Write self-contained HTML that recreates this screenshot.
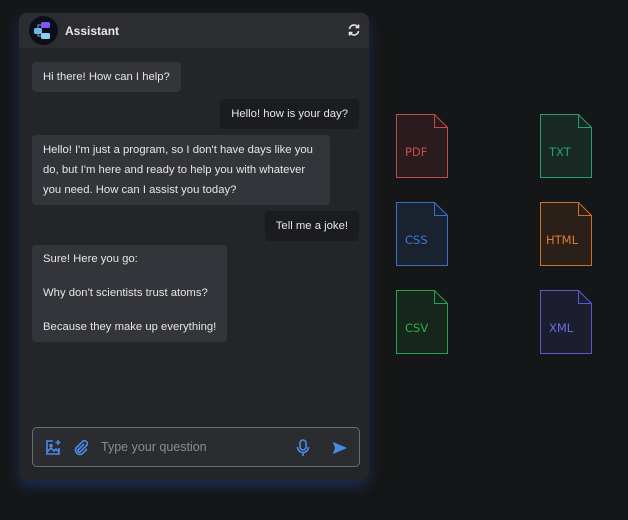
<!DOCTYPE html>
<html><head><style>
*{margin:0;padding:0;box-sizing:border-box}
body{width:628px;height:520px;background:#151617;font-family:"Liberation Sans",sans-serif;position:relative;overflow:hidden}
.panel{position:absolute;left:19px;top:13px;width:350px;height:467px;background:#232529;border-radius:8px;box-shadow:0 6px 14px rgba(40,90,200,.35)}
.hdr{height:35px;background:#2c2d31;border-radius:8px 8px 0 0;position:relative}
.av{position:absolute;left:10px;top:3px;width:29px;height:29px;border-radius:50%;background:#0c0e1a}
.ttl{position:absolute;left:46px;top:11px;color:#e8e8e8;font-size:12px;font-weight:bold}
.b{position:absolute;font-size:11.3px;color:#e6e6e6;line-height:20px;padding:5px 11px;border-radius:4px;white-space:nowrap}
.bot{background:#33353a;left:13px}
.usr{background:#1b1c1f;right:10px}
.inp{position:absolute;left:13px;top:414px;width:328px;height:40px;border:1px solid #6b6d72;border-radius:5px;background:#2a2c30}
.ph{position:absolute;left:68px;top:12px;color:#8a8c90;font-size:12.5px}
.f{position:absolute;width:52px;height:64px}
.f span{position:absolute;left:9px;top:31px;font-family:"DejaVu Sans",sans-serif;font-size:11.5px}
</style></head><body>
<div class="panel">
<div class="hdr"><div class="av"><svg width="29" height="29"><rect x="12" y="6" width="9" height="6" rx="1.5" fill="#7a5af0"/><rect x="5" y="12" width="8" height="6" rx="1.5" fill="#6ab8e8"/><rect x="12" y="17" width="9" height="6" rx="1.5" fill="#8ad0f0"/><path d="M9 12V9h3M9 18v2h3" stroke="#8aa" fill="none"/></svg></div><div class="ttl">Assistant</div>
<svg style="position:absolute;right:8px;top:10px" width="14" height="14" viewBox="0 0 14 14" fill="none" stroke="#e8e8e8" stroke-width="1.6"><path d="M2.5 6A4.5 4.5 0 0 1 11 4.5M11.5 8A4.5 4.5 0 0 1 3 9.5"/><path d="M11.5 1.5v3h-3M2.5 12.5v-3h3"/></svg></div>
<div class="b bot" style="top:49px">Hi there! How can I help?</div>
<div class="b usr" style="top:86px">Hello! how is your day?</div>
<div class="b bot" style="top:122px;width:298px">Hello! I'm just a program, so I don't have days like you<br>do, but I'm here and ready to help you with whatever<br>you need. How can I assist you today?</div>
<div class="b usr" style="top:198px">Tell me a joke!</div>
<div class="b bot" style="top:232px;width:195px;line-height:17px;padding:6px 11px">Sure! Here you go:<br><br>Why don't scientists trust atoms?<br><br>Because they make up everything!</div>
<div class="inp">
<svg style="position:absolute;left:11px;top:11px" width="18" height="18" viewBox="0 0 18 18" fill="none" stroke="#4a8ae8" stroke-width="1.6"><path d="M9 2H3v13h12V9"/><path d="M3 13l4-4 3 3 2-2 3 3"/><circle cx="7" cy="6.5" r="1"/><path d="M14 1v5M11.5 3.5h5"/></svg>
<svg style="position:absolute;left:39px;top:11px" width="18" height="18" viewBox="0 0 18 18" fill="none" stroke="#4a8ae8" stroke-width="1.6"><path d="M12 5l-6 6a1.5 1.5 0 0 0 2 2l7-7a3 3 0 0 0-4-4L4 9a4.5 4.5 0 0 0 6 6l5-5"/></svg>
<div class="ph">Type your question</div>
<svg style="position:absolute;left:262px;top:11px" width="16" height="18" viewBox="0 0 16 18" fill="none" stroke="#4a8ae8" stroke-width="1.6"><rect x="5" y="1" width="6" height="10" rx="3"/><path d="M2.5 8a5.5 5.5 0 0 0 11 0M8 13.5V17"/></svg>
<svg style="position:absolute;left:299px;top:13px" width="16" height="14" viewBox="0 0 16 14"><path d="M1 1l14 6-14 6 2-6z" fill="#4a8ae8"/></svg>
</div>
</div>
<svg class="f" style="left:396px;top:114px" viewBox="0 0 52 64"><path d="M.5 .5h38l13 13v50H.5z" fill="#2a1c1e" stroke="#c24b4b"/><path d="M38.5 .5v13h13" fill="none" stroke="#c24b4b"/></svg>
<svg class="f" style="left:540px;top:114px" viewBox="0 0 52 64"><path d="M.5 .5h38l13 13v50H.5z" fill="#182822" stroke="#2a9a72"/><path d="M38.5 .5v13h13" fill="none" stroke="#2a9a72"/></svg>
<svg class="f" style="left:396px;top:202px" viewBox="0 0 52 64"><path d="M.5 .5h38l13 13v50H.5z" fill="#1a2230" stroke="#3a70c8"/><path d="M38.5 .5v13h13" fill="none" stroke="#3a70c8"/></svg>
<svg class="f" style="left:540px;top:202px" viewBox="0 0 52 64"><path d="M.5 .5h38l13 13v50H.5z" fill="#2a2019" stroke="#d0702a"/><path d="M38.5 .5v13h13" fill="none" stroke="#d0702a"/></svg>
<svg class="f" style="left:396px;top:290px" viewBox="0 0 52 64"><path d="M.5 .5h38l13 13v50H.5z" fill="#17261c" stroke="#2aa04a"/><path d="M38.5 .5v13h13" fill="none" stroke="#2aa04a"/></svg>
<svg class="f" style="left:540px;top:290px" viewBox="0 0 52 64"><path d="M.5 .5h38l13 13v50H.5z" fill="#1c1e30" stroke="#5a5ad0"/><path d="M38.5 .5v13h13" fill="none" stroke="#5a5ad0"/></svg>
<div class="f" style="left:396px;top:114px"><span style="color:#d04a4a">PDF</span></div>
<div class="f" style="left:540px;top:114px"><span style="color:#2aa078">TXT</span></div>
<div class="f" style="left:396px;top:202px"><span style="color:#3a78d8">CSS</span></div>
<div class="f" style="left:540px;top:202px"><span style="color:#e07a30;left:6px">HTML</span></div>
<div class="f" style="left:396px;top:290px"><span style="color:#2ab04a">CSV</span></div>
<div class="f" style="left:540px;top:290px"><span style="color:#6a6ae0">XML</span></div>
</body></html>
